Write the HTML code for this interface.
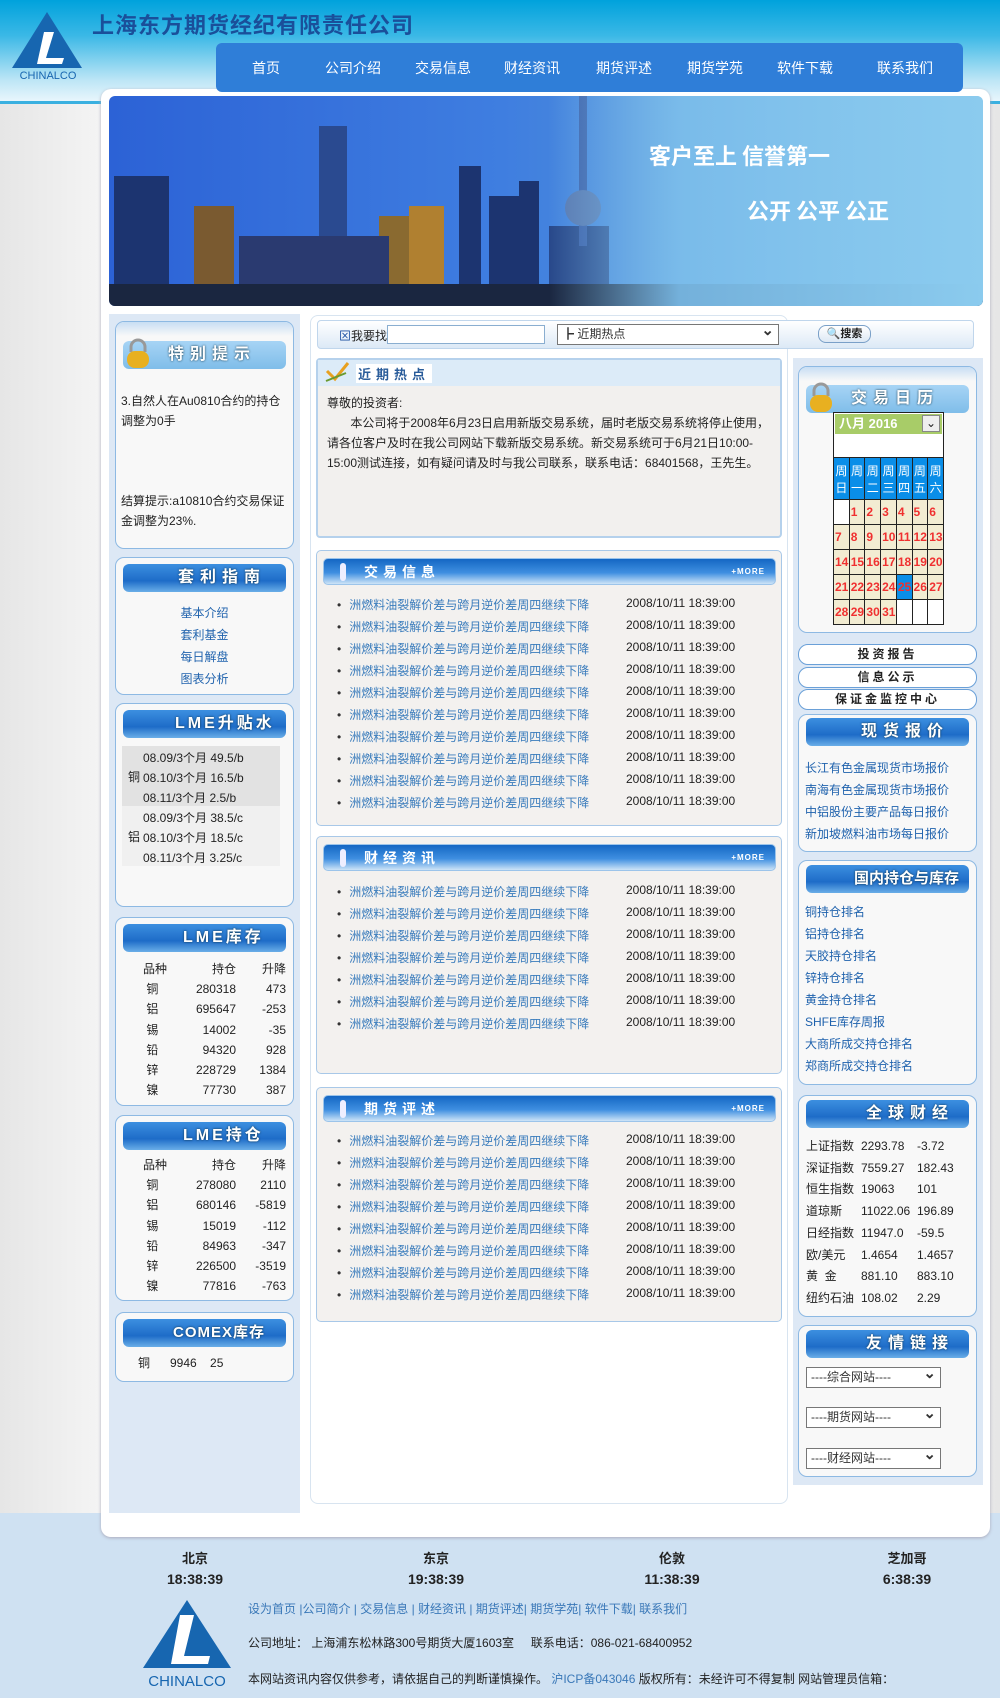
<!DOCTYPE html>
<html><head><meta charset="utf-8">
<style>
*{margin:0;padding:0;box-sizing:border-box}
body{width:1000px;height:1698px;position:relative;overflow:hidden;background:#fff;font-family:"Liberation Sans","Noto Sans CJK SC","WenQuanYi Zen Hei",sans-serif;font-size:12px;color:#222}
.a{position:absolute}
.hdr{left:0;top:0;width:1000px;height:104px;background:linear-gradient(180deg,#00a2dc 0%,#3ab8e6 35%,#bfe6f6 80%,#e8f6fc 100%);border-bottom:3px solid #3ab0e0}
.side{left:0;top:104px;width:1000px;height:1410px;background:linear-gradient(90deg,#e6e6e6,#f4f4f4 100px,#f4f4f4 900px,#e6e6e6)}
.foot{left:0;top:1513px;width:1000px;height:185px;background:#cfe1f2}
.wrap{left:101px;top:89px;width:889px;height:1448px;background:#fff;border-radius:10px;box-shadow:0 1px 3px #aab}
.nav{left:216px;top:43px;width:747px;height:49px;background:#2f7ed8;border-radius:6px}
.nav span{position:absolute;top:15px;color:#fff;font-size:14px;transform:translateX(-50%)}
.box{background:#f8f8f8;border:1px solid #8db9e3;border-radius:9px}
.bh{height:28px;border-radius:6px;background:linear-gradient(180deg,#3c8fe0,#1e6cc8 60%,#6aaee8);color:#fff;font-weight:bold;font-size:16px;letter-spacing:6px;line-height:28px;text-shadow:0 0 2px #134;white-space:nowrap;overflow:hidden}
.bhl{background:linear-gradient(180deg,#a7d4f5,#7fbde9);}
.sh{height:27px;border-radius:5px;background:linear-gradient(180deg,#1467c4,#3f8fe0 55%,#cde4f7);border:1px solid #9cc4ea;color:#fff;font-weight:bold;font-size:14px;letter-spacing:5px;line-height:26px}
.sec{background:#f3f1ef;border:1px solid #a8c8e8;border-radius:5px}
.row{position:absolute;left:20px;font-size:12px}
.row i{font-style:normal;color:#333;margin-right:8px}
.row b{font-weight:normal;color:#3a7cbc}
.row em{font-style:normal;position:absolute;left:289px;top:0;white-space:nowrap;color:#222}
.lnk{color:#1f62ad}
.cal td{border:1px solid #222;width:16px;height:25px;font-size:12px;color:#f03030;background:#f2ecd2;text-align:left;padding-left:1px;font-weight:bold}
.pill{left:798px;width:179px;height:21px;border:1px solid #6aa0d8;border-radius:10px;background:#fff;text-align:center;font-weight:bold;font-size:12px;letter-spacing:3px;line-height:19px}
.sel{border:1px solid #777;background:#fff;height:21px;font-size:12px;line-height:19px;padding-left:4px;color:#333}
.sel:after{content:"⌄";position:absolute;right:4px;top:-4px;font-size:15px;font-weight:bold}
</style></head><body>
<div class="a hdr"></div>
<div class="a side"></div>
<div class="a foot"></div>
<svg class="a" style="left:10px;top:10px" width="76" height="70" viewBox="0 0 76 70"><polygon points="37,2 72,58 2,58" fill="#1766b0"/><polygon points="34,22 44,22 36,48 54,48 52,54 27,54" fill="#fff"/><text x="38" y="69" font-size="11" fill="#1766b0" text-anchor="middle" font-family="Liberation Sans">CHINALCO</text></svg>
<div class="a" style="left:92px;top:13px;font-size:22px;font-weight:bold;color:#1a4f9a;letter-spacing:1px;line-height:26px">上海东方期货经纪有限责任公司</div>
<div class="a wrap"></div>
<div class="a nav">
<span style="left:50px">首页</span><span style="left:137px">公司介绍</span><span style="left:227px">交易信息</span><span style="left:316px">财经资讯</span><span style="left:408px">期货评述</span><span style="left:499px">期货学苑</span><span style="left:589px">软件下载</span><span style="left:689px">联系我们</span>
</div>
<svg class="a" style="left:109px;top:96px;border-radius:6px" width="874" height="210" viewBox="0 0 874 210">
<defs><linearGradient id="sk" x1="0" y1="0" x2="1" y2="0"><stop offset="0" stop-color="#2c62d6"/><stop offset=".45" stop-color="#3f7ee0"/><stop offset=".65" stop-color="#4f8fd8"/><stop offset="1" stop-color="#8bc8ee"/></linearGradient>
<linearGradient id="fd" x1="0" y1="0" x2="1" y2="0"><stop offset="0" stop-color="#8bc8ee" stop-opacity="0"/><stop offset=".3" stop-color="#7ec0ec" stop-opacity=".9"/><stop offset="1" stop-color="#8bcbee"/></linearGradient></defs>
<rect width="874" height="210" fill="url(#sk)"/>
<g fill="#1c3470">
<rect x="5" y="80" width="55" height="120"/><rect x="85" y="110" width="40" height="90" fill="#7a5a30"/><rect x="210" y="30" width="28" height="170" fill="#2a4a90"/><rect x="270" y="120" width="40" height="80" fill="#8a6a30"/><rect x="300" y="110" width="35" height="90" fill="#b08030"/><rect x="350" y="70" width="22" height="130"/><rect x="380" y="100" width="30" height="100"/><rect x="410" y="85" width="20" height="115"/><rect x="440" y="130" width="60" height="70" fill="#28488a"/><rect x="470" y="0" width="8" height="150" fill="#3a5ea8"/><rect x="130" y="140" width="150" height="60" fill="#2a3a70"/>
</g>
<circle cx="474" cy="112" r="18" fill="#5878b0"/>
<rect x="0" y="188" width="874" height="22" fill="#1a2640"/>
<rect x="440" y="0" width="434" height="210" fill="url(#fd)"/>
<text x="540" y="68" font-size="22" font-weight="bold" fill="#fff" font-family="Noto Sans CJK SC">客户至上 信誉第一</text>
<text x="638" y="123" font-size="22" font-weight="bold" fill="#fff" font-family="Noto Sans CJK SC">公开 公平 公正</text>
</svg>
<div class="a" style="left:109px;top:314px;width:191px;height:1199px;background:#dde8f5"></div>
<div class="a box" style="left:115px;top:321px;width:179px;height:228px;overflow:hidden">
<div class="a" style="left:0;top:0;width:177px;height:14px;background:linear-gradient(#c8def4,#f8f8f8)"></div>
<div class="a bh bhl" style="left:7px;top:19px;width:163px;padding-left:45px">特别提示</div>
<svg class="a" style="left:8px;top:16px" width="28" height="32"><path d="M7 14V9a7 7 0 0 1 14 0v5" stroke="#999" stroke-width="3" fill="none"/><rect x="3" y="13" width="22" height="17" rx="8" fill="#e8b020"/></svg>
<div class="a" style="left:5px;top:69px;width:168px;line-height:20px">3.自然人在Au0810合约的持仓调整为0手<br><br><br><br>结算提示:a10810合约交易保证金调整为23%.<br><br>a10811合约交易保证金调整为</div>
</div>
<div class="a box" style="left:115px;top:557px;width:179px;height:138px">
<div class="a bh" style="left:7px;top:6px;width:163px;padding-left:55px">套利指南</div>
<div class="a lnk" style="left:0;top:44px;width:177px;text-align:center;line-height:22px">基本介绍<br>套利基金<br>每日解盘<br>图表分析</div>
</div>
<div class="a box" style="left:115px;top:703px;width:179px;height:204px">
<div class="a bh" style="left:7px;top:6px;width:163px;padding-left:52px;letter-spacing:3px">LME升贴水</div>
<div class="a" style="left:6px;top:42px;width:158px;height:60px;background:#e2e2e2"></div>
<div class="a" style="left:6px;top:102px;width:158px;height:60px;background:#f0f0f0"></div>
<div class="a" style="left:27px;top:44px;line-height:20px;white-space:pre">08.09/3个月 49.5/b
08.10/3个月 16.5/b
08.11/3个月 2.5/b
08.09/3个月 38.5/c
08.10/3个月 18.5/c
08.11/3个月 3.25/c</div>
<div class="a" style="left:12px;top:64px">铜</div><div class="a" style="left:12px;top:124px">铝</div>
</div>
<div class="a box" style="left:115px;top:917px;width:179px;height:189px">
<div class="a bh" style="left:7px;top:6px;width:163px;padding-left:60px;letter-spacing:3px">LME库存</div>
<div class="a" style="left:27px;top:41px;line-height:20.2px">品种<br>&nbsp;铜<br>&nbsp;铝<br>&nbsp;锡<br>&nbsp;铅<br>&nbsp;锌<br>&nbsp;镍</div>
<div class="a" style="left:70px;width:50px;top:41px;line-height:20.2px;text-align:right">持仓<br>280318<br>695647<br>14002<br>94320<br>228729<br>77730</div>
<div class="a" style="left:130px;width:40px;top:41px;line-height:20.2px;text-align:right">升降<br>473<br>-253<br>-35<br>928<br>1384<br>387</div>
</div>
<div class="a box" style="left:115px;top:1115px;width:179px;height:186px">
<div class="a bh" style="left:7px;top:6px;width:163px;padding-left:60px;letter-spacing:3px">LME持仓</div>
<div class="a" style="left:27px;top:39px;line-height:20.2px">品种<br>&nbsp;铜<br>&nbsp;铝<br>&nbsp;锡<br>&nbsp;铅<br>&nbsp;锌<br>&nbsp;镍</div>
<div class="a" style="left:70px;width:50px;top:39px;line-height:20.2px;text-align:right">持仓<br>278080<br>680146<br>15019<br>84963<br>226500<br>77816</div>
<div class="a" style="left:130px;width:40px;top:39px;line-height:20.2px;text-align:right">升降<br>2110<br>-5819<br>-112<br>-347<br>-3519<br>-763</div>
</div>
<div class="a box" style="left:115px;top:1312px;width:179px;height:70px">
<div class="a bh" style="left:7px;top:6px;width:163px;padding-left:50px;letter-spacing:1px;font-size:15px">COMEX库存</div>
<div class="a" style="left:22px;top:41px;white-space:pre">铜      9946    25</div>
</div>
<div class="a" style="left:310px;top:315px;width:478px;height:1189px;background:#fff;border:1px solid #d8e4f0;border-radius:8px"></div>
<div class="a" style="left:317px;top:320px;width:657px;height:29px;background:linear-gradient(#fff,#dce9f6);border:1px solid #c0d6ec;border-radius:4px"></div>
<div class="a" style="left:339px;top:327px;font-size:12px"><span style="color:#1a4fa0">⊠</span>我要找</div>
<div class="a" style="left:387px;top:325px;width:158px;height:19px;border:1px solid #8aaed0;background:#fff"></div>
<div class="a sel" style="left:557px;top:324px;width:222px;height:21px">┣ 近期热点</div>
<div class="a" style="left:818px;top:325px;width:53px;height:18px;border:1px solid #7aa0c8;border-radius:8px;background:linear-gradient(#fff,#dde8f4);font-size:11px;text-align:center;line-height:16px;font-weight:bold">🔍搜索</div>

<div class="a" style="left:316px;top:358px;width:466px;height:180px;background:#f2f0ee;border:2px solid #b5d1ec;border-radius:4px">
<div class="a" style="left:0;top:0;width:462px;height:26px;background:#dcebf8"></div>
<div class="a" style="left:38px;top:4px;font-size:13px;font-weight:bold;color:#2a5c9a;letter-spacing:5px;background:#fff;padding:0 2px">近期热点</div>
<svg class="a" style="left:6px;top:1px" width="28" height="24"><path d="M3 10l8 8L24 2" stroke="#e8a020" stroke-width="3" fill="none"/><path d="M2 20l20-8" stroke="#6a9a30" stroke-width="2"/></svg>
<div class="a" style="left:9px;top:33px;width:448px;line-height:20px;font-size:12px">尊敬的投资者:<br>&nbsp;&nbsp;&nbsp;&nbsp;&nbsp;&nbsp;&nbsp;本公司将于2008年6月23日启用新版交易系统，届时老版交易系统将停止使用，请各位客户及时在我公司网站下载新版交易系统。新交易系统可于6月21日10:00-15:00测试连接，如有疑问请及时与我公司联系，联系电话：68401568，王先生。</div>
</div>

<div class="a sec" style="left:316px;top:550px;width:466px;height:276px">
<div class="a sh" style="left:6px;top:7px;width:453px;padding-left:40px">交易信息<span style="position:absolute;right:10px;top:0;font-size:8px;letter-spacing:1px">+MORE</span><span style="position:absolute;left:16px;top:4px;width:6px;height:18px;background:#eef;border-radius:3px"></span></div>
<div class="row" style="top:45px"><i>•</i><b>洲燃料油裂解价差与跨月逆价差周四继续下降</b><em>2008/10/11 18:39:00</em></div>
<div class="row" style="top:67px"><i>•</i><b>洲燃料油裂解价差与跨月逆价差周四继续下降</b><em>2008/10/11 18:39:00</em></div>
<div class="row" style="top:89px"><i>•</i><b>洲燃料油裂解价差与跨月逆价差周四继续下降</b><em>2008/10/11 18:39:00</em></div>
<div class="row" style="top:111px"><i>•</i><b>洲燃料油裂解价差与跨月逆价差周四继续下降</b><em>2008/10/11 18:39:00</em></div>
<div class="row" style="top:133px"><i>•</i><b>洲燃料油裂解价差与跨月逆价差周四继续下降</b><em>2008/10/11 18:39:00</em></div>
<div class="row" style="top:155px"><i>•</i><b>洲燃料油裂解价差与跨月逆价差周四继续下降</b><em>2008/10/11 18:39:00</em></div>
<div class="row" style="top:177px"><i>•</i><b>洲燃料油裂解价差与跨月逆价差周四继续下降</b><em>2008/10/11 18:39:00</em></div>
<div class="row" style="top:199px"><i>•</i><b>洲燃料油裂解价差与跨月逆价差周四继续下降</b><em>2008/10/11 18:39:00</em></div>
<div class="row" style="top:221px"><i>•</i><b>洲燃料油裂解价差与跨月逆价差周四继续下降</b><em>2008/10/11 18:39:00</em></div>
<div class="row" style="top:243px"><i>•</i><b>洲燃料油裂解价差与跨月逆价差周四继续下降</b><em>2008/10/11 18:39:00</em></div>
</div>

<div class="a sec" style="left:316px;top:836px;width:466px;height:238px">
<div class="a sh" style="left:6px;top:7px;width:453px;padding-left:40px">财经资讯<span style="position:absolute;right:10px;top:0;font-size:8px;letter-spacing:1px">+MORE</span><span style="position:absolute;left:16px;top:4px;width:6px;height:18px;background:#eef;border-radius:3px"></span></div>
<div class="row" style="top:46px"><i>•</i><b>洲燃料油裂解价差与跨月逆价差周四继续下降</b><em>2008/10/11 18:39:00</em></div>
<div class="row" style="top:68px"><i>•</i><b>洲燃料油裂解价差与跨月逆价差周四继续下降</b><em>2008/10/11 18:39:00</em></div>
<div class="row" style="top:90px"><i>•</i><b>洲燃料油裂解价差与跨月逆价差周四继续下降</b><em>2008/10/11 18:39:00</em></div>
<div class="row" style="top:112px"><i>•</i><b>洲燃料油裂解价差与跨月逆价差周四继续下降</b><em>2008/10/11 18:39:00</em></div>
<div class="row" style="top:134px"><i>•</i><b>洲燃料油裂解价差与跨月逆价差周四继续下降</b><em>2008/10/11 18:39:00</em></div>
<div class="row" style="top:156px"><i>•</i><b>洲燃料油裂解价差与跨月逆价差周四继续下降</b><em>2008/10/11 18:39:00</em></div>
<div class="row" style="top:178px"><i>•</i><b>洲燃料油裂解价差与跨月逆价差周四继续下降</b><em>2008/10/11 18:39:00</em></div>
</div>

<div class="a sec" style="left:316px;top:1087px;width:466px;height:235px">
<div class="a sh" style="left:6px;top:7px;width:453px;padding-left:40px">期货评述<span style="position:absolute;right:10px;top:0;font-size:8px;letter-spacing:1px">+MORE</span><span style="position:absolute;left:16px;top:4px;width:6px;height:18px;background:#eef;border-radius:3px"></span></div>
<div class="row" style="top:44px"><i>•</i><b>洲燃料油裂解价差与跨月逆价差周四继续下降</b><em>2008/10/11 18:39:00</em></div>
<div class="row" style="top:66px"><i>•</i><b>洲燃料油裂解价差与跨月逆价差周四继续下降</b><em>2008/10/11 18:39:00</em></div>
<div class="row" style="top:88px"><i>•</i><b>洲燃料油裂解价差与跨月逆价差周四继续下降</b><em>2008/10/11 18:39:00</em></div>
<div class="row" style="top:110px"><i>•</i><b>洲燃料油裂解价差与跨月逆价差周四继续下降</b><em>2008/10/11 18:39:00</em></div>
<div class="row" style="top:132px"><i>•</i><b>洲燃料油裂解价差与跨月逆价差周四继续下降</b><em>2008/10/11 18:39:00</em></div>
<div class="row" style="top:154px"><i>•</i><b>洲燃料油裂解价差与跨月逆价差周四继续下降</b><em>2008/10/11 18:39:00</em></div>
<div class="row" style="top:176px"><i>•</i><b>洲燃料油裂解价差与跨月逆价差周四继续下降</b><em>2008/10/11 18:39:00</em></div>
<div class="row" style="top:198px"><i>•</i><b>洲燃料油裂解价差与跨月逆价差周四继续下降</b><em>2008/10/11 18:39:00</em></div>
</div>

<div class="a" style="left:793px;top:358px;width:190px;height:1127px;background:#dde8f5"></div>
<div class="a box" style="left:798px;top:366px;width:179px;height:267px;overflow:hidden">
<div class="a" style="left:0;top:0;width:177px;height:14px;background:linear-gradient(#c8def4,#f8f8f8)"></div>
<div class="a bh bhl" style="left:7px;top:18px;width:163px;padding-left:45px">交易日历</div>
<svg class="a" style="left:8px;top:15px" width="28" height="32"><path d="M7 14V9a7 7 0 0 1 14 0v5" stroke="#999" stroke-width="3" fill="none"/><rect x="3" y="13" width="22" height="17" rx="8" fill="#e8b020"/></svg>
</div>
<div class="a" style="left:833px;top:412px;width:111px;height:211px;background:#fff;border:1px solid #222"></div>
<div class="a" style="left:835px;top:414px;width:107px;height:20px;background:#a8cc68;color:#fff;font-weight:bold;font-size:13px;padding-left:4px;line-height:20px">八月 2016</div>
<div class="a" style="left:922px;top:415px;width:18px;height:17px;background:#eee;border:1px solid #888;font-size:12px;text-align:center;line-height:14px">⌄</div>
<table class="a cal" style="left:833px;top:457px;border-collapse:collapse;width:111px">
<tr><td style="background:#0a8ee8;color:#fff;height:42px;font-weight:normal;text-align:center;padding:0">周<br>日</td><td style="background:#0a8ee8;color:#fff;font-weight:normal;text-align:center;padding:0">周<br>一</td><td style="background:#0a8ee8;color:#fff;font-weight:normal;text-align:center;padding:0">周<br>二</td><td style="background:#0a8ee8;color:#fff;font-weight:normal;text-align:center;padding:0">周<br>三</td><td style="background:#0a8ee8;color:#fff;font-weight:normal;text-align:center;padding:0">周<br>四</td><td style="background:#0a8ee8;color:#fff;font-weight:normal;text-align:center;padding:0">周<br>五</td><td style="background:#0a8ee8;color:#fff;font-weight:normal;text-align:center;padding:0">周<br>六</td></tr>
<tr><td style="background:#fff"></td><td>1</td><td>2</td><td>3</td><td>4</td><td>5</td><td>6</td></tr>
<tr><td>7</td><td>8</td><td>9</td><td>10</td><td>11</td><td>12</td><td>13</td></tr>
<tr><td>14</td><td>15</td><td>16</td><td>17</td><td>18</td><td>19</td><td>20</td></tr>
<tr><td>21</td><td>22</td><td>23</td><td>24</td><td style="background:#0a8ee8">25</td><td>26</td><td>27</td></tr>
<tr><td>28</td><td>29</td><td>30</td><td>31</td><td style="background:#fff"></td><td style="background:#fff"></td><td style="background:#fff"></td></tr>
</table>
<div class="a pill" style="top:644px">投资报告</div>
<div class="a pill" style="top:667px">信息公示</div>
<div class="a pill" style="top:689px">保证金监控中心</div>
<div class="a box" style="left:798px;top:714px;width:179px;height:138px">
<div class="a bh" style="left:7px;top:3px;width:163px;padding-left:55px">现货报价</div>
<div class="a lnk" style="left:6px;top:42px;line-height:22px">长江有色金属现货市场报价<br>南海有色金属现货市场报价<br>中铝股份主要产品每日报价<br>新加坡燃料油市场每日报价</div>
</div>
<div class="a box" style="left:798px;top:860px;width:179px;height:225px">
<div class="a bh" style="left:7px;top:4px;width:163px;padding-left:48px;letter-spacing:0;font-size:15px">国内持仓与库存</div>
<div class="a lnk" style="left:6px;top:40px;line-height:22px">铜持仓排名<br>铝持仓排名<br>天胶持仓排名<br>锌持仓排名<br>黄金持仓排名<br>SHFE库存周报<br>大商所成交持仓排名<br>郑商所成交持仓排名</div>
</div>
<div class="a box" style="left:798px;top:1095px;width:179px;height:222px">
<div class="a bh" style="left:7px;top:4px;width:163px;padding-left:60px">全球财经</div>
<div class="a" style="left:7px;top:40px;line-height:21.7px">上证指数<br>深证指数<br>恒生指数<br>道琼斯<br>日经指数<br>欧/美元<br>黄&nbsp;&nbsp;金<br>纽约石油</div>
<div class="a" style="left:62px;top:40px;line-height:21.7px">2293.78<br>7559.27<br>19063<br>11022.06<br>11947.0<br>1.4654<br>881.10<br>108.02</div>
<div class="a" style="left:118px;top:40px;line-height:21.7px">-3.72<br>182.43<br>101<br>196.89<br>-59.5<br>1.4657<br>883.10<br>2.29</div>
</div>
<div class="a box" style="left:798px;top:1325px;width:179px;height:152px">
<div class="a bh" style="left:7px;top:4px;width:163px;padding-left:60px">友情链接</div>
<div class="a sel" style="left:7px;top:41px;width:135px">----综合网站----</div>
<div class="a sel" style="left:7px;top:81px;width:135px">----期货网站----</div>
<div class="a sel" style="left:7px;top:122px;width:135px">----财经网站----</div>
</div>
<div class="a" style="left:155px;top:1548px;width:80px;text-align:center;font-weight:bold;font-size:13px;line-height:21px">北京<br><span style="font-size:14px">18:38:39</span></div>
<div class="a" style="left:396px;top:1548px;width:80px;text-align:center;font-weight:bold;font-size:13px;line-height:21px">东京<br><span style="font-size:14px">19:38:39</span></div>
<div class="a" style="left:632px;top:1548px;width:80px;text-align:center;font-weight:bold;font-size:13px;line-height:21px">伦敦<br><span style="font-size:14px">11:38:39</span></div>
<div class="a" style="left:867px;top:1548px;width:80px;text-align:center;font-weight:bold;font-size:13px;line-height:21px">芝加哥<br><span style="font-size:14px">6:38:39</span></div>
<svg class="a" style="left:140px;top:1600px" width="96" height="90" viewBox="0 0 96 90"><polygon points="47,0 91,68 3,68" fill="#1766b0"/><polygon points="40,15 54,15 44,56 70,56 68,64 31,64" fill="#fff"/><text x="47" y="86" font-size="15" fill="#1766b0" text-anchor="middle" font-family="Liberation Sans">CHINALCO</text></svg>
<div class="a" style="left:248px;top:1600px;color:#3a78b8;font-size:12px">设为首页 |公司简介 | 交易信息 | 财经资讯 | 期货评述| 期货学苑| 软件下载| 联系我们</div>
<div class="a" style="left:248px;top:1634px;font-size:12px">公司地址： 上海浦东松林路300号期货大厦1603室 &nbsp;&nbsp;&nbsp;&nbsp;联系电话：086-021-68400952</div>
<div class="a" style="left:248px;top:1670px;font-size:12px">本网站资讯内容仅供参考，请依据自己的判断谨慎操作。 <span style="color:#3a78b8">沪ICP备043046</span> 版权所有：未经许可不得复制 网站管理员信箱：</div>
</body></html>
